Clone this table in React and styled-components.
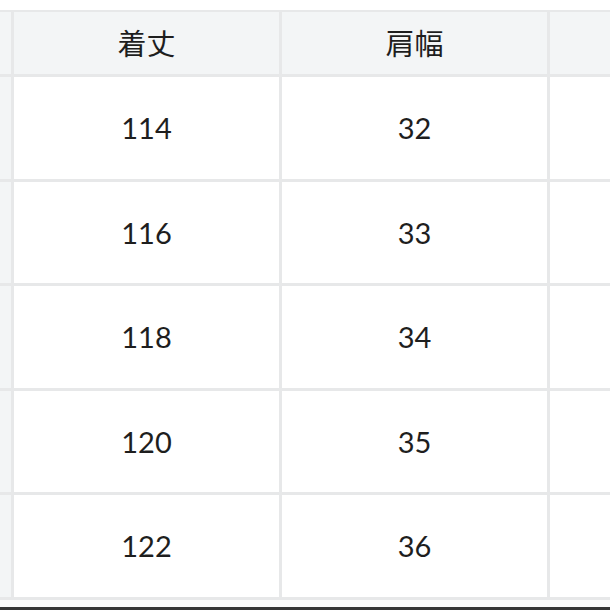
import React from "react";
import styled, { createGlobalStyle } from "styled-components";

const Global = createGlobalStyle`
  html, body { margin: 0; padding: 0; background: #ffffff; }
  body { font-family: "Lato", "Noto Sans CJK JP", sans-serif; }
`;

const Page = styled.div`
  width: 610px;
  height: 610px;
  overflow: hidden;
  display: flex;
  flex-direction: column;
  padding-top: 10px;
  box-sizing: border-box;
  background: #ffffff;
`;

const Table = styled.div`
  display: grid;
  grid-template-columns: repeat(4, 265px);
  grid-template-rows: 62px repeat(5, 101.5px);
  gap: 3px;
  padding: 2px 3px 3px 3px;
  margin-left: -257px;
  width: max-content;
  background: #e7e8e9;
`;

const Cell = styled.div`
  display: flex;
  align-items: center;
  justify-content: center;
  background: ${(p) => (p.$head ? "#f3f5f6" : "#ffffff")};
  color: #1e1e1e;
  font-family: "Lato", "Noto Sans CJK JP", sans-serif;
  font-size: 29px;
  font-weight: 400;
  line-height: 1;
`;

const Spacer = styled.div`
  flex: 1;
`;

const BottomBar = styled.div`
  height: 3px;
  background: #3a3a3a;
`;

/* Columns outside the visible crop (left label column, right column) are
   rendered as empty cells, as only their edges show in the picture. */
const headers = ["", "着丈", "肩幅", ""];
const rows = [
  ["", "114", "32", ""],
  ["", "116", "33", ""],
  ["", "118", "34", ""],
  ["", "120", "35", ""],
  ["", "122", "36", ""],
];

export default function App() {
  return (
    <>
      <Global />
      <Page>
        <Table>
          {headers.map((h, i) => (
            <Cell key={"h" + i} $head>
              {h}
            </Cell>
          ))}
          {rows.map((r, ri) =>
            r.map((v, i) => (
              <Cell key={ri + "-" + i} $head={i === 0}>
                {v}
              </Cell>
            ))
          )}
        </Table>
        <Spacer />
        <BottomBar />
      </Page>
    </>
  );
}
